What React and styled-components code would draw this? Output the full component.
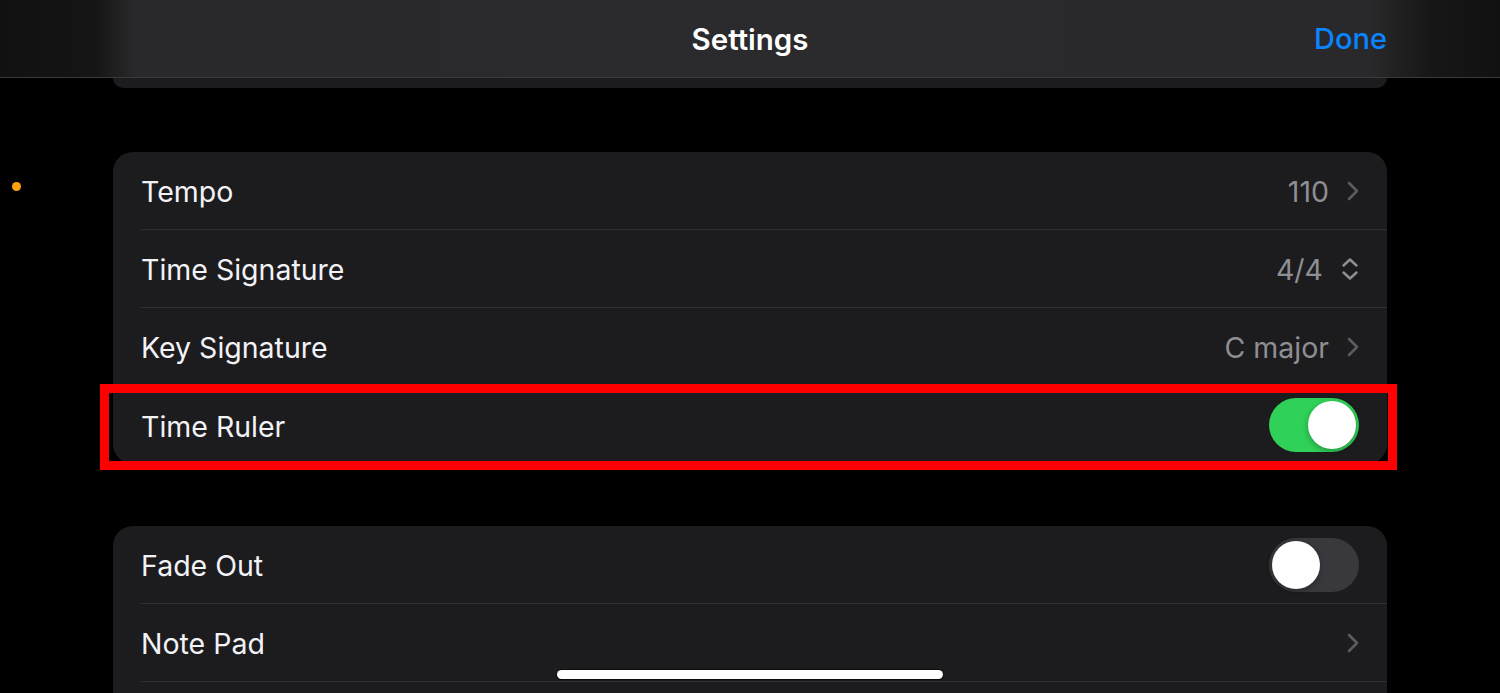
import React from "react";
import styled, { createGlobalStyle } from "styled-components";

const Global = createGlobalStyle`
  html, body { margin: 0; padding: 0; background: #000; overflow: hidden; }
  body { font-family: Inter, "Noto Sans", "Liberation Sans", sans-serif; -webkit-font-smoothing: antialiased; }
  #root { min-height: 693px; }
`;

const Screen = styled.div`
  position: relative;
  width: 1500px;
  height: 693px;
  overflow: hidden;
  background: #000;
`;

const NavBar = styled.header`
  height: 78px;
  box-sizing: border-box;
  padding: 0 113px;
  display: grid;
  grid-template-columns: 1fr auto 1fr;
  align-items: center;
  background: linear-gradient(
    to right,
    #111111 0px,
    #151515 95px,
    #29292b 135px,
    #2b2b2d 750px,
    #29292b 1370px,
    #171717 1430px,
    #111111 1500px
  );
  border-bottom: 1px solid #3a3a3c;
`;

const Title = styled.h1`
  grid-column: 2;
  margin: 0;
  font-size: 29.5px;
  font-weight: 600;
  color: #fff;
`;

const DoneButton = styled.button`
  grid-column: 3;
  justify-self: end;
  background: none;
  border: 0;
  padding: 0;
  font-family: inherit;
  font-size: 29px;
  font-weight: 500;
  color: #0a84ff;
`;

const Content = styled.main`
  padding: 0 113px;
  display: flex;
  flex-direction: column;
`;

const CardTail = styled.div`
  height: 10px;
  background: #1c1c1e;
  border-radius: 0 0 14px 14px;
`;

const Card = styled.section`
  margin-top: ${(p) => p.$gap}px;
  background: #1c1c1e;
  border-radius: 20px;
`;

const Row = styled.div`
  position: relative;
  height: 78px;
  padding-left: 28px;
  display: flex;
`;

const RowInner = styled.div`
  flex: 1;
  display: flex;
  align-items: center;
  justify-content: space-between;
  padding-right: 28px;
  border-bottom: ${(p) => (p.$last ? "none" : "1px solid #2f2f31")};
`;

const Label = styled.span`
  font-size: 28.5px;
  color: #f2f2f7;
  font-weight: 400;
  padding-top: 2px;
`;

const Accessory = styled.div`
  display: flex;
  align-items: center;
  gap: 18px;
`;

const Value = styled.span`
  font-size: 28.5px;
  color: #8e8e93;
  padding-top: 2px;
`;

const SwitchTrack = styled.div`
  position: relative;
  width: 90px;
  height: 54px;
  border-radius: 27px;
  background: ${(p) => (p.$on ? "#30d158" : "#39393d")};
`;

const SwitchKnob = styled.div`
  position: absolute;
  top: 3px;
  left: ${(p) => (p.$on ? "39px" : "3px")};
  width: 48px;
  height: 48px;
  border-radius: 50%;
  background: #fff;
  box-shadow: 0 2px 6px rgba(0, 0, 0, 0.3);
`;

const Highlight = styled.div`
  position: absolute;
  left: -13px;
  right: -10px;
  top: -2px;
  bottom: -6px;
  border: 9px solid #ff0000;
  pointer-events: none;
`;

const StatusDot = styled.div`
  position: absolute;
  left: 12px;
  top: 182px;
  width: 9px;
  height: 9px;
  border-radius: 50%;
  background: #ff9f0a;
`;

const HomeIndicator = styled.div`
  position: absolute;
  left: 557px;
  top: 670px;
  width: 386px;
  height: 9px;
  border-radius: 5px;
  background: #fff;
  box-shadow: 0 0 0 1px rgba(0, 0, 0, 0.6);
`;

const Chevron = () => (
  <svg width="12" height="20" viewBox="0 0 12 20" fill="none">
    <path d="M2 2l8 8-8 8" stroke="#5c5c60" strokeWidth="2.6" strokeLinecap="round" strokeLinejoin="round" />
  </svg>
);

const UpDown = () => (
  <svg width="18" height="24" viewBox="0 0 18 24" fill="none">
    <path d="M2.5 8.5L9 2.5l6.5 6M2.5 15.5L9 21.5l6.5-6" stroke="#8e8e93" strokeWidth="2.4" strokeLinecap="round" strokeLinejoin="round" />
  </svg>
);

const Switch = ({ on }) => (
  <SwitchTrack $on={on}>
    <SwitchKnob $on={on} />
  </SwitchTrack>
);

const SettingRow = ({ label, value, accessory, last, highlight }) => (
  <Row>
    <RowInner $last={last}>
      <Label>{label}</Label>
      <Accessory>
        {value && <Value>{value}</Value>}
        {accessory}
      </Accessory>
    </RowInner>
    {highlight && <Highlight />}
  </Row>
);

export default function App() {
  return (
    <>
      <Global />
      <Screen>
        <NavBar>
          <Title>Settings</Title>
          <DoneButton>Done</DoneButton>
        </NavBar>
        <Content>
          <CardTail />
          <Card $gap={64}>
            <SettingRow label="Tempo" value="110" accessory={<Chevron />} />
            <SettingRow label="Time Signature" value="4/4" accessory={<UpDown />} />
            <SettingRow label="Key Signature" value="C major" accessory={<Chevron />} />
            <SettingRow label="Time Ruler" accessory={<Switch on />} last highlight />
          </Card>
          <Card $gap={62}>
            <SettingRow label="Fade Out" accessory={<Switch on={false} />} />
            <SettingRow label="Note Pad" accessory={<Chevron />} />
            <SettingRow label="" last />
          </Card>
        </Content>
        <StatusDot />
        <HomeIndicator />
      </Screen>
    </>
  );
}
